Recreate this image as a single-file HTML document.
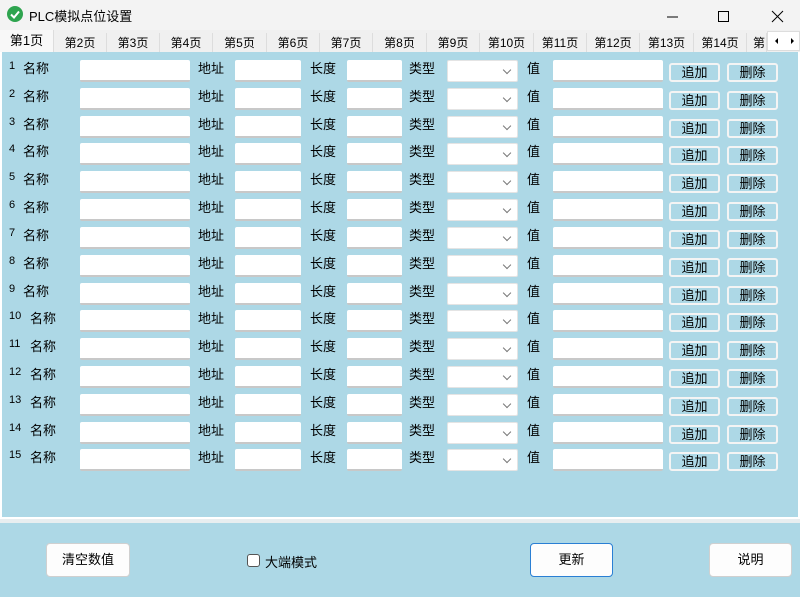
<!DOCTYPE html>
<html><head><meta charset="utf-8"><style>
*{margin:0;padding:0;box-sizing:border-box}
body{width:800px;height:597px;overflow:hidden;background:#add8e6;font-family:"Liberation Sans","Noto Sans CJK SC",sans-serif;font-size:13px;color:#000;position:relative}
.title{position:absolute;left:0;top:0;width:800px;height:30px;background:#f3f3f3}
.title .t{position:absolute;left:29px;top:6px;font-size:13px}
.ok{position:absolute;left:7px;top:6px;width:16px;height:16px;border-radius:50%;background:#2ea44f}
.tabs{position:absolute;left:0;top:30px;width:800px;height:23px;background:#f0f0f0}
.tab{position:absolute;top:3px;height:20px;background:#f0f0f0;border-right:1px solid #ddd;font-size:12px;line-height:20px;text-align:center}
.panel{position:absolute;left:0;top:52px;width:800px;height:467px;background:#add8e6;border:2px solid #fff;border-top:none}
.sep{position:absolute;left:0;top:519px;width:800px;height:4px;background:#e8eef0}
.row{position:absolute;left:0;width:800px;height:22px}
.row span{position:absolute;top:-2px;font-size:13px}
.row .n{font-size:11px;top:0}
.in{position:absolute;top:0;height:22px;background:#fff;border-bottom:2px solid #c8c8c8;border-radius:2px}
.cb{position:absolute;top:0;left:447px;width:71px;height:22px;background:#fff;border-radius:2px;border:1px solid #e4e4e4}
.cb:after{content:"";position:absolute;right:7px;top:6px;width:5px;height:5px;border-right:1px solid #777;border-bottom:1px solid #777;transform:rotate(45deg)}
.bt{position:absolute;top:3px;height:19px;background:#add8e6;border:2px solid #f4f4f4;border-radius:3px;font-size:13px;line-height:15px;text-align:center}
.btn{position:absolute;top:543px;height:34px;background:#fdfdfd;border:1px solid #d0d0d0;border-radius:4px;text-align:center;line-height:32px;font-size:13px}
</style></head><body>
<div class="title"><div class="ok"><svg width="16" height="16"><path d="M4 8.5l3 3 5-6" stroke="#fff" stroke-width="2" fill="none"/></svg></div><div class="t">PLC模拟点位设置</div>
<svg style="position:absolute;left:660px;top:5px" width="140" height="20"><path d="M7 12h11" stroke="#000"/><rect x="58.5" y="6.5" width="10" height="10" fill="none" stroke="#000"/><path d="M112 6l11 11M123 6l-11 11" stroke="#000"/></svg></div>
<div class="tabs">
<div class="tab" style="left:0;top:0;width:54px;height:23px;background:#f8f8f8;line-height:21px;font-size:13px">第1页</div>
<div class="tab" style="left:54px;width:53px">第2页</div>
<div class="tab" style="left:107px;width:53px">第3页</div>
<div class="tab" style="left:160px;width:53px">第4页</div>
<div class="tab" style="left:213px;width:54px">第5页</div>
<div class="tab" style="left:267px;width:53px">第6页</div>
<div class="tab" style="left:320px;width:53px">第7页</div>
<div class="tab" style="left:373px;width:54px">第8页</div>
<div class="tab" style="left:427px;width:53px">第9页</div>
<div class="tab" style="left:480px;width:54px">第10页</div>
<div class="tab" style="left:534px;width:53px">第11页</div>
<div class="tab" style="left:587px;width:53px">第12页</div>
<div class="tab" style="left:640px;width:54px">第13页</div>
<div class="tab" style="left:694px;width:53px">第14页</div>
<div class="tab" style="left:747px;width:20px;overflow:hidden;text-align:left;padding-left:6px">第</div>
<div style="position:absolute;left:767px;top:1px;width:33px;height:20px;background:#fff;border:1px solid #ddd"><svg width="33" height="18"><path d="M10 6v6l-3-3z M23 6v6l3-3z" fill="#000"/></svg></div>
</div>
<div class="panel"></div>
<div class="sep"></div>

<div class="row" style="top:60px"><span class="n" style="left:9px">1</span><span style="left:23px">名称</span><div class="in" style="left:80px;width:110px"></div><span style="left:198px">地址</span><div class="in" style="left:235px;width:66px"></div><span style="left:310px">长度</span><div class="in" style="left:347px;width:55px"></div><span style="left:409px">类型</span><div class="cb"></div><span style="left:527px">值</span><div class="in" style="left:553px;width:110px"></div><div class="bt" style="left:669px;width:51px">追加</div><div class="bt" style="left:727px;width:51px">删除</div></div>
<div class="row" style="top:88px"><span class="n" style="left:9px">2</span><span style="left:23px">名称</span><div class="in" style="left:80px;width:110px"></div><span style="left:198px">地址</span><div class="in" style="left:235px;width:66px"></div><span style="left:310px">长度</span><div class="in" style="left:347px;width:55px"></div><span style="left:409px">类型</span><div class="cb"></div><span style="left:527px">值</span><div class="in" style="left:553px;width:110px"></div><div class="bt" style="left:669px;width:51px">追加</div><div class="bt" style="left:727px;width:51px">删除</div></div>
<div class="row" style="top:116px"><span class="n" style="left:9px">3</span><span style="left:23px">名称</span><div class="in" style="left:80px;width:110px"></div><span style="left:198px">地址</span><div class="in" style="left:235px;width:66px"></div><span style="left:310px">长度</span><div class="in" style="left:347px;width:55px"></div><span style="left:409px">类型</span><div class="cb"></div><span style="left:527px">值</span><div class="in" style="left:553px;width:110px"></div><div class="bt" style="left:669px;width:51px">追加</div><div class="bt" style="left:727px;width:51px">删除</div></div>
<div class="row" style="top:143px"><span class="n" style="left:9px">4</span><span style="left:23px">名称</span><div class="in" style="left:80px;width:110px"></div><span style="left:198px">地址</span><div class="in" style="left:235px;width:66px"></div><span style="left:310px">长度</span><div class="in" style="left:347px;width:55px"></div><span style="left:409px">类型</span><div class="cb"></div><span style="left:527px">值</span><div class="in" style="left:553px;width:110px"></div><div class="bt" style="left:669px;width:51px">追加</div><div class="bt" style="left:727px;width:51px">删除</div></div>
<div class="row" style="top:171px"><span class="n" style="left:9px">5</span><span style="left:23px">名称</span><div class="in" style="left:80px;width:110px"></div><span style="left:198px">地址</span><div class="in" style="left:235px;width:66px"></div><span style="left:310px">长度</span><div class="in" style="left:347px;width:55px"></div><span style="left:409px">类型</span><div class="cb"></div><span style="left:527px">值</span><div class="in" style="left:553px;width:110px"></div><div class="bt" style="left:669px;width:51px">追加</div><div class="bt" style="left:727px;width:51px">删除</div></div>
<div class="row" style="top:199px"><span class="n" style="left:9px">6</span><span style="left:23px">名称</span><div class="in" style="left:80px;width:110px"></div><span style="left:198px">地址</span><div class="in" style="left:235px;width:66px"></div><span style="left:310px">长度</span><div class="in" style="left:347px;width:55px"></div><span style="left:409px">类型</span><div class="cb"></div><span style="left:527px">值</span><div class="in" style="left:553px;width:110px"></div><div class="bt" style="left:669px;width:51px">追加</div><div class="bt" style="left:727px;width:51px">删除</div></div>
<div class="row" style="top:227px"><span class="n" style="left:9px">7</span><span style="left:23px">名称</span><div class="in" style="left:80px;width:110px"></div><span style="left:198px">地址</span><div class="in" style="left:235px;width:66px"></div><span style="left:310px">长度</span><div class="in" style="left:347px;width:55px"></div><span style="left:409px">类型</span><div class="cb"></div><span style="left:527px">值</span><div class="in" style="left:553px;width:110px"></div><div class="bt" style="left:669px;width:51px">追加</div><div class="bt" style="left:727px;width:51px">删除</div></div>
<div class="row" style="top:255px"><span class="n" style="left:9px">8</span><span style="left:23px">名称</span><div class="in" style="left:80px;width:110px"></div><span style="left:198px">地址</span><div class="in" style="left:235px;width:66px"></div><span style="left:310px">长度</span><div class="in" style="left:347px;width:55px"></div><span style="left:409px">类型</span><div class="cb"></div><span style="left:527px">值</span><div class="in" style="left:553px;width:110px"></div><div class="bt" style="left:669px;width:51px">追加</div><div class="bt" style="left:727px;width:51px">删除</div></div>
<div class="row" style="top:283px"><span class="n" style="left:9px">9</span><span style="left:23px">名称</span><div class="in" style="left:80px;width:110px"></div><span style="left:198px">地址</span><div class="in" style="left:235px;width:66px"></div><span style="left:310px">长度</span><div class="in" style="left:347px;width:55px"></div><span style="left:409px">类型</span><div class="cb"></div><span style="left:527px">值</span><div class="in" style="left:553px;width:110px"></div><div class="bt" style="left:669px;width:51px">追加</div><div class="bt" style="left:727px;width:51px">删除</div></div>
<div class="row" style="top:310px"><span class="n" style="left:9px">10</span><span style="left:30px">名称</span><div class="in" style="left:80px;width:110px"></div><span style="left:198px">地址</span><div class="in" style="left:235px;width:66px"></div><span style="left:310px">长度</span><div class="in" style="left:347px;width:55px"></div><span style="left:409px">类型</span><div class="cb"></div><span style="left:527px">值</span><div class="in" style="left:553px;width:110px"></div><div class="bt" style="left:669px;width:51px">追加</div><div class="bt" style="left:727px;width:51px">删除</div></div>
<div class="row" style="top:338px"><span class="n" style="left:9px">11</span><span style="left:30px">名称</span><div class="in" style="left:80px;width:110px"></div><span style="left:198px">地址</span><div class="in" style="left:235px;width:66px"></div><span style="left:310px">长度</span><div class="in" style="left:347px;width:55px"></div><span style="left:409px">类型</span><div class="cb"></div><span style="left:527px">值</span><div class="in" style="left:553px;width:110px"></div><div class="bt" style="left:669px;width:51px">追加</div><div class="bt" style="left:727px;width:51px">删除</div></div>
<div class="row" style="top:366px"><span class="n" style="left:9px">12</span><span style="left:30px">名称</span><div class="in" style="left:80px;width:110px"></div><span style="left:198px">地址</span><div class="in" style="left:235px;width:66px"></div><span style="left:310px">长度</span><div class="in" style="left:347px;width:55px"></div><span style="left:409px">类型</span><div class="cb"></div><span style="left:527px">值</span><div class="in" style="left:553px;width:110px"></div><div class="bt" style="left:669px;width:51px">追加</div><div class="bt" style="left:727px;width:51px">删除</div></div>
<div class="row" style="top:394px"><span class="n" style="left:9px">13</span><span style="left:30px">名称</span><div class="in" style="left:80px;width:110px"></div><span style="left:198px">地址</span><div class="in" style="left:235px;width:66px"></div><span style="left:310px">长度</span><div class="in" style="left:347px;width:55px"></div><span style="left:409px">类型</span><div class="cb"></div><span style="left:527px">值</span><div class="in" style="left:553px;width:110px"></div><div class="bt" style="left:669px;width:51px">追加</div><div class="bt" style="left:727px;width:51px">删除</div></div>
<div class="row" style="top:422px"><span class="n" style="left:9px">14</span><span style="left:30px">名称</span><div class="in" style="left:80px;width:110px"></div><span style="left:198px">地址</span><div class="in" style="left:235px;width:66px"></div><span style="left:310px">长度</span><div class="in" style="left:347px;width:55px"></div><span style="left:409px">类型</span><div class="cb"></div><span style="left:527px">值</span><div class="in" style="left:553px;width:110px"></div><div class="bt" style="left:669px;width:51px">追加</div><div class="bt" style="left:727px;width:51px">删除</div></div>
<div class="row" style="top:449px"><span class="n" style="left:9px">15</span><span style="left:30px">名称</span><div class="in" style="left:80px;width:110px"></div><span style="left:198px">地址</span><div class="in" style="left:235px;width:66px"></div><span style="left:310px">长度</span><div class="in" style="left:347px;width:55px"></div><span style="left:409px">类型</span><div class="cb"></div><span style="left:527px">值</span><div class="in" style="left:553px;width:110px"></div><div class="bt" style="left:669px;width:51px">追加</div><div class="bt" style="left:727px;width:51px">删除</div></div>

<div class="btn" style="left:46px;width:84px">清空数值</div>
<div style="position:absolute;left:247px;top:554px;width:13px;height:13px;background:#fff;border:1px solid #555;border-radius:3px"></div>
<div style="position:absolute;left:265px;top:552px">大端模式</div>
<div class="btn" style="left:530px;width:83px;border:1px solid #2a7fd4">更新</div>
<div class="btn" style="left:709px;width:83px">说明</div>
</body></html>
